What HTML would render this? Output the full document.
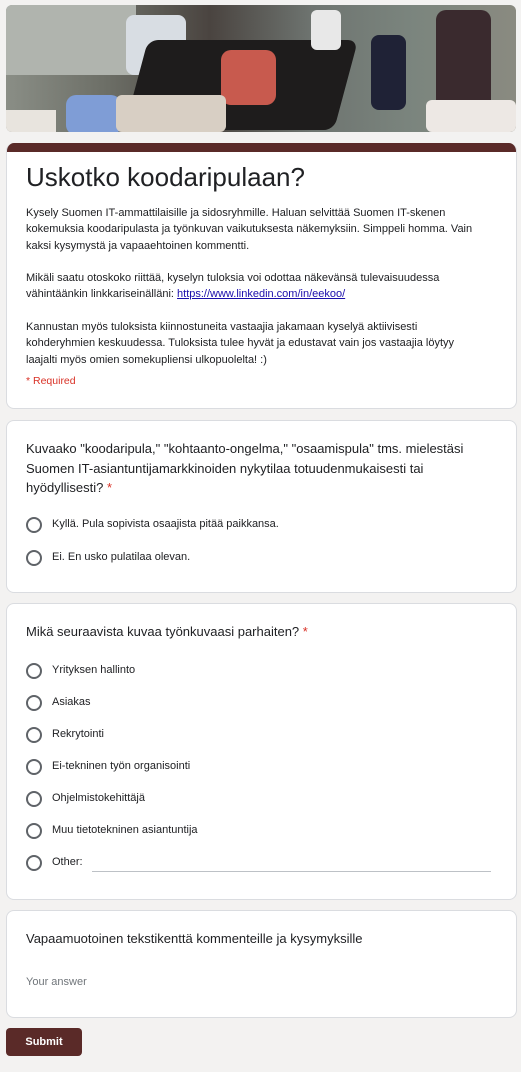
<!DOCTYPE html>
<html><head><meta charset="utf-8"><style>
*{box-sizing:border-box;margin:0;padding:0}
body{width:521px;height:1072px;background:#f3f2f1;font-family:"Liberation Sans",Arial,sans-serif;color:#202124;position:relative;overflow:hidden}
.abs{position:absolute}
.card{position:absolute;left:6px;width:511px;background:#fff;border:1px solid #dadce0;border-radius:8px}
.t{position:absolute;left:26px;white-space:nowrap}
.d{font-size:11px;line-height:16.3px;color:#202124}
.q{font-size:13px;line-height:19.5px}
.r{position:absolute;left:19px;width:16px;height:16px;border:2px solid #5f6368;border-radius:50%}
.l{position:absolute;left:45px;font-size:11px;color:#202124;white-space:nowrap}
</style></head><body>
<div class="abs" style="left:6px;top:5px;width:510px;height:127px;border-radius:6px;overflow:hidden;background:linear-gradient(90deg,#8a8e86 0%,#6c6e66 20%,#4a4440 40%,#6e7470 60%,#7b857e 80%,#8a8a80 100%)">
<div class="abs" style="left:0;top:0;width:130px;height:70px;background:#b0b4ae"></div>
<div class="abs" style="left:120px;top:10px;width:60px;height:60px;background:#d8dde3;border-radius:8px"></div>
<div class="abs" style="left:130px;top:35px;width:210px;height:90px;background:#1e1c1c;border-radius:10px;transform:skewX(-15deg)"></div>
<div class="abs" style="left:215px;top:45px;width:55px;height:55px;background:#c85a4e;border-radius:10px"></div>
<div class="abs" style="left:60px;top:90px;width:55px;height:40px;background:#7f9dd6;border-radius:10px"></div>
<div class="abs" style="left:305px;top:5px;width:30px;height:40px;background:#e8e8e8;border-radius:6px"></div>
<div class="abs" style="left:365px;top:30px;width:35px;height:75px;background:#1f2236;border-radius:8px"></div>
<div class="abs" style="left:430px;top:5px;width:55px;height:100px;background:#3a2a2e;border-radius:10px"></div>
<div class="abs" style="left:420px;top:95px;width:90px;height:32px;background:#ede8e4;border-radius:6px"></div>
<div class="abs" style="left:0;top:105px;width:50px;height:22px;background:#e8e4de"></div>
<div class="abs" style="left:110px;top:90px;width:110px;height:37px;background:#d8cfc4;border-radius:6px"></div>
</div>

<div class="card" style="top:143px;height:266px;border-top:none;overflow:hidden">
<div class="abs" style="left:-1px;right:-1px;top:0;height:9px;background:#5a2a28"></div>
<div class="t" style="left:19px;top:19px;font-size:26px;color:#202124">Uskotko koodaripulaan?</div>
<div class="t d" style="left:19px;top:62px">Kysely Suomen IT-ammattilaisille ja sidosryhmille. Haluan selvittää Suomen IT-skenen<br>kokemuksia koodaripulasta ja työnkuvan vaikutuksesta näkemyksiin. Simppeli homma. Vain<br>kaksi kysymystä ja vapaaehtoinen kommentti.<br><br>Mikäli saatu otoskoko riittää, kyselyn tuloksia voi odottaa näkevänsä tulevaisuudessa<br>vähintäänkin linkkariseinälläni: <span style="color:#1a0dab;text-decoration:underline">https://www.linkedin.com/in/eekoo/</span><br><br>Kannustan myös tuloksista kiinnostuneita vastaajia jakamaan kyselyä aktiivisesti<br>kohderyhmien keskuudessa. Tuloksista tulee hyvät ja edustavat vain jos vastaajia löytyy<br>laajalti myös omien somekupliensi ulkopuolelta! :)</div>
<div class="t" style="left:19px;top:232px;font-size:10.5px;color:#d93025">* Required</div>
</div>

<div class="card" style="top:420px;height:173px">
<div class="t q" style="left:19px;top:18px">Kuvaako "koodaripula," "kohtaanto-ongelma," "osaamispula" tms. mielestäsi<br>Suomen IT-asiantuntijamarkkinoiden nykytilaa totuudenmukaisesti tai<br>hyödyllisesti? <span style="color:#d93025">*</span></div>
<div class="r" style="top:96px"></div><div class="l" style="top:97px">Kyllä. Pula sopivista osaajista pitää paikkansa.</div>
<div class="r" style="top:129px"></div><div class="l" style="top:130px">Ei. En usko pulatilaa olevan.</div>
</div>

<div class="card" style="top:603px;height:297px">
<div class="t q" style="left:19px;top:18px">Mikä seuraavista kuvaa työnkuvaasi parhaiten? <span style="color:#d93025">*</span></div>
<div class="r" style="top:59px"></div><div class="l" style="top:60px">Yrityksen hallinto</div>
<div class="r" style="top:91px"></div><div class="l" style="top:92px">Asiakas</div>
<div class="r" style="top:123px"></div><div class="l" style="top:124px">Rekrytointi</div>
<div class="r" style="top:155px"></div><div class="l" style="top:156px">Ei-tekninen työn organisointi</div>
<div class="r" style="top:187px"></div><div class="l" style="top:188px">Ohjelmistokehittäjä</div>
<div class="r" style="top:219px"></div><div class="l" style="top:220px">Muu tietotekninen asiantuntija</div>
<div class="r" style="top:251px"></div><div class="l" style="top:252px">Other:</div>
<div class="abs" style="left:85px;width:399px;top:267px;height:1px;background:#bdc1c6"></div>
</div>

<div class="card" style="top:910px;height:108px">
<div class="t q" style="left:19px;top:18px">Vapaamuotoinen tekstikenttä kommenteille ja kysymyksille</div>
<div class="t" style="left:19px;top:65px;font-size:11px;color:#70757a">Your answer</div>
</div>

<div class="abs" style="left:6px;top:1028px;width:76px;height:28px;background:#5a2a28;border-radius:4px;color:#fff;font-size:11px;font-weight:bold;text-align:center;line-height:28px">Submit</div>
</body></html>
